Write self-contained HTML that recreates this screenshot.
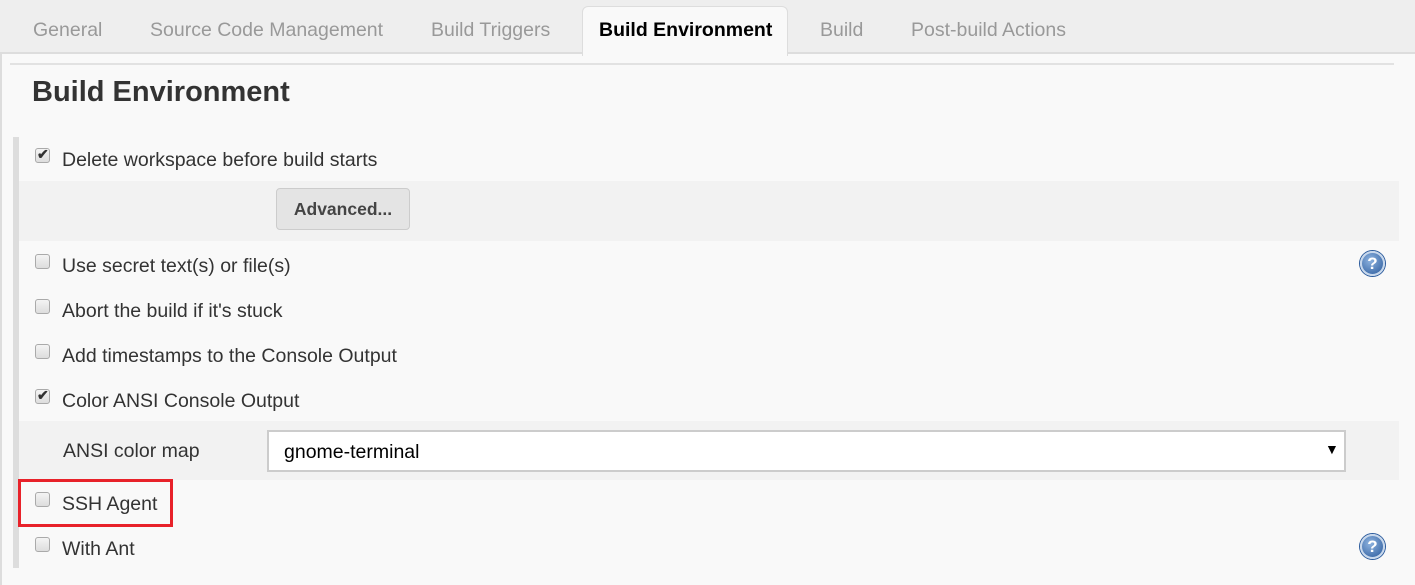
<!DOCTYPE html>
<html><head><style>
body{margin:0;width:1415px;height:585px;background:#f9f9f9;font-family:"Liberation Sans",Arial,sans-serif;position:relative;overflow:hidden;color:#333}
.a{position:absolute}
.tabs{left:0;top:0;width:1415px;height:54px;background:#eee;border-bottom:2px solid #ddd;box-sizing:border-box}
.tab{top:19px;font-size:19.5px;color:#999}
.cb{width:15px;height:15px;border:1px solid #aaa;border-radius:3px;background:linear-gradient(#f4f4f4,#ddd);box-sizing:border-box}
.lbl{font-size:19.5px;color:#333}
.ck{font-size:14px;color:#333;font-weight:bold}
.help{width:25px;height:25px;border-radius:50%;background:radial-gradient(circle at 40% 35%,#8fb4e0,#2a5a9c);border:2px solid #c8d8ec;box-shadow:0 0 0 1px #2a5a9c;box-sizing:border-box;color:#fff;font-weight:bold;font-size:17px;text-align:center;line-height:21px}
</style></head><body>
<div class="a" style="left:0;top:0;width:2px;height:585px;background:#ddd"></div>
<div class="a tabs"></div>
<div class="a tab" style="left:33px">General</div>
<div class="a tab" style="left:150px">Source Code Management</div>
<div class="a tab" style="left:431px">Build Triggers</div>
<div class="a" style="left:582px;top:6px;width:206px;height:50px;background:#f9f9f9;border:1px solid #ddd;border-bottom:none;border-radius:6px 6px 0 0;box-sizing:border-box"></div>
<div class="a tab" style="left:599px;color:#000;font-weight:bold">Build Environment</div>
<div class="a tab" style="left:820px">Build</div>
<div class="a tab" style="left:911px">Post-build Actions</div>
<div class="a" style="left:10px;top:63px;width:1384px;height:2px;background:#e2e2e2"></div>
<div class="a" style="left:32px;top:76px;font-size:29px;font-weight:bold;color:#333">Build Environment</div>
<div class="a" style="left:13px;top:137px;width:6px;height:431px;background:#ddd"></div>
<div class="a" style="left:19px;top:181px;width:1380px;height:60px;background:#f2f2f2"></div>
<div class="a" style="left:276px;top:188px;width:134px;height:42px;border:1px solid #ccc;border-radius:4px;background:#e4e4e4;box-sizing:border-box;font-size:17.5px;font-weight:bold;color:#444;text-align:center;line-height:40px">Advanced...</div>
<div class="a" style="left:19px;top:421px;width:1380px;height:59px;background:#f2f2f2"></div>
<div class="a lbl" style="left:63px;top:440px">ANSI color map</div>
<div class="a" style="left:267px;top:430px;width:1079px;height:42px;border:2px solid #ccc;background:#fff;box-sizing:border-box"></div>
<div class="a" style="left:284px;top:441px;font-size:19.5px;color:#000">gnome-terminal</div>
<div class="a" style="left:1325px;top:441px;font-size:14px;color:#000">▼</div>

<div class="a cb" style="left:35px;top:148px"></div><div class="a ck" style="left:37px;top:146px">✔</div>
<div class="a lbl" style="left:62px;top:149px">Delete workspace before build starts</div>
<div class="a cb" style="left:35px;top:254px"></div><div class="a lbl" style="left:62px;top:255px">Use secret text(s) or file(s)</div>
<div class="a cb" style="left:35px;top:299px"></div><div class="a lbl" style="left:62px;top:300px">Abort the build if it's stuck</div>
<div class="a cb" style="left:35px;top:344px"></div><div class="a lbl" style="left:62px;top:345px">Add timestamps to the Console Output</div>
<div class="a cb" style="left:35px;top:389px"></div><div class="a ck" style="left:37px;top:387px">✔</div>
<div class="a lbl" style="left:62px;top:390px">Color ANSI Console Output</div>
<div class="a cb" style="left:35px;top:492px"></div><div class="a lbl" style="left:62px;top:493px">SSH Agent</div>
<div class="a" style="left:18px;top:479px;width:155px;height:48px;border:3px solid #e8222a;box-sizing:border-box"></div>
<div class="a cb" style="left:35px;top:537px"></div><div class="a lbl" style="left:62px;top:538px">With Ant</div>
<div class="a help" style="left:1360px;top:251px">?</div>
<div class="a help" style="left:1360px;top:534px">?</div>
</body></html>
